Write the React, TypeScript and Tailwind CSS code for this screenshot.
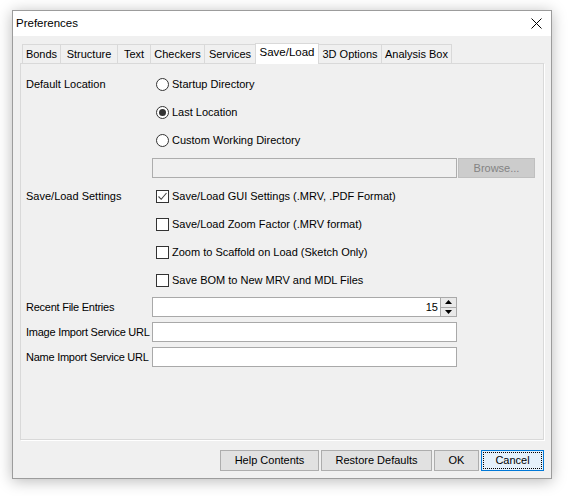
import React from 'react'

const tabs = [
  { name: 'Bonds', w: 'w-[39px]' },
  { name: 'Structure', w: 'w-[58px]' },
  { name: 'Text', w: 'w-[34px]' },
  { name: 'Checkers', w: 'w-[55px]' },
  { name: 'Services', w: 'w-[52px]' },
  { name: 'Save/Load', w: 'w-[64px]', active: true },
  { name: '3D Options', w: 'w-[64px]' },
  { name: 'Analysis Box', w: 'w-[71px]' },
]

function Radio({ checked }: { checked?: boolean }) {
  return (
    <span className="flex h-[13px] w-[13px] items-center justify-center rounded-full border border-[#333] bg-white">
      {checked && <span className="h-[7px] w-[7px] rounded-full bg-[#333]" />}
    </span>
  )
}

function Check({ checked }: { checked?: boolean }) {
  return (
    <span className="flex h-[13px] w-[13px] items-center justify-center border border-[#333] bg-white">
      {checked && (
        <svg width="11" height="11" viewBox="0 0 11 11">
          <path d="M1.5 5.5 L4.2 8.3 L9.5 2" fill="none" stroke="#444" strokeWidth="1.1" />
        </svg>
      )}
    </span>
  )
}

function Row({ label, children }: { label?: string; children: React.ReactNode }) {
  return (
    <div className="flex h-[28px] items-center">
      <div className="w-[126px] shrink-0">{label}</div>
      {children}
    </div>
  )
}

function Option({ kind, checked, text }: { kind: 'radio' | 'check'; checked?: boolean; text: string }) {
  return (
    <div className="flex items-center gap-[3px] pl-[4px]">
      {kind === 'radio' ? <Radio checked={checked} /> : <Check checked={checked} />}
      <span>{text}</span>
    </div>
  )
}

function FieldRow({ label, children, first }: { label: string; children?: React.ReactNode; first?: boolean }) {
  return (
    <div className={`flex h-[20px] items-center ${first ? 'mt-[3px]' : 'mt-[5px]'}`}>
      <div className="w-[126px] shrink-0 overflow-hidden whitespace-nowrap tracking-[-0.25px]">{label}</div>
      <div className="flex h-[20px] w-[305px] items-center border border-[#a9a9a9] bg-white">{children}</div>
    </div>
  )
}

function Button({ w, children, focus }: { w: string; children: React.ReactNode; focus?: boolean }) {
  if (focus) {
    return (
      <div className={`${w} flex h-[21px] items-center justify-center border border-[#0078d7] bg-[#e5f1fb] p-[1px]`}>
        <div className="flex h-full w-full items-center justify-center border border-dotted border-black">{children}</div>
      </div>
    )
  }
  return (
    <div className={`${w} flex h-[21px] items-center justify-center border border-[#adadad] bg-[#e1e1e1]`}>{children}</div>
  )
}

export default function App() {
  return (
    <div className="h-[496px] w-[568px] bg-white pl-[12px] pt-[10px] text-[11px] text-black" style={{ fontFamily: '"Liberation Sans", Arial, sans-serif' }}>
      <div className="flex h-[469px] w-[540px] flex-col border border-[#9c9c9c] bg-[#f0f0f0] shadow-[0_2px_14px_rgba(0,0,0,0.28)]">
        {/* Title bar */}
        <div className="flex h-[25px] shrink-0 items-center justify-between bg-white pl-[3px] pr-[9px]">
          <span className="text-[11.5px]">Preferences</span>
          <svg width="11" height="11" viewBox="0 0 11 11">
            <path d="M0.5 0.5 L10.5 10.5 M10.5 0.5 L0.5 10.5" stroke="#000" strokeWidth="1" />
          </svg>
        </div>

        <div className="flex flex-1 flex-col px-[7px] pt-[7px]">
          {/* Tabs */}
          <div className="flex h-[20px] items-end pl-[2px]">
            {tabs.map((t, i) =>
              t.active ? (
                <div key={t.name} className={`${t.w} relative z-10 -mb-px -ml-px flex h-[21px] items-center justify-center border border-b-0 border-[#d9d9d9] bg-white pb-[2px] text-[11.5px]`}>
                  {t.name}
                </div>
              ) : (
                <div key={t.name} className={`${t.w} ${i > 0 ? '-ml-px' : ''} flex h-[19px] items-center justify-center border border-b-0 border-[#d9d9d9] bg-[#f0f0f0]`}>
                  {t.name}
                </div>
              )
            )}
          </div>

          {/* Panel */}
          <div className="flex h-[377px] flex-col border border-[#d9d9d9] bg-[#f0f0f0] pl-[5px] pt-[6px] shadow-[1px_1px_0_#ffffff]">
            <Row label="Default Location">
              <Option kind="radio" text="Startup Directory" />
            </Row>
            <Row>
              <Option kind="radio" checked text="Last Location" />
            </Row>
            <Row>
              <Option kind="radio" text="Custom Working Directory" />
            </Row>
            <Row>
              <div className="h-[20px] w-[305px] border border-[#adadad] bg-[#f0f0f0]" />
              <div className="ml-[1px] flex h-[20px] w-[77px] items-center justify-center border border-[#bfbfbf] bg-[#cccccc] text-[#838383]">
                Browse...
              </div>
            </Row>
            <Row label="Save/Load Settings">
              <Option kind="check" checked text="Save/Load GUI Settings (.MRV, .PDF Format)" />
            </Row>
            <Row>
              <Option kind="check" text="Save/Load Zoom Factor (.MRV format)" />
            </Row>
            <Row>
              <Option kind="check" text="Zoom to Scaffold on Load (Sketch Only)" />
            </Row>
            <Row>
              <Option kind="check" text="Save BOM to New MRV and MDL Files" />
            </Row>
            <FieldRow label="Recent File Entries" first>
              <span className="flex-1 pr-[2px] text-right">15</span>
              <div className="flex h-full w-[16px] flex-col border-l border-[#a9a9a9] bg-[#e9e9e9]">
                <div className="flex flex-1 items-center justify-center border-b border-[#a9a9a9]">
                  <svg width="7" height="4" viewBox="0 0 7 4"><path d="M0 4 L3.5 0 L7 4 Z" fill="#000" /></svg>
                </div>
                <div className="flex flex-1 items-center justify-center">
                  <svg width="7" height="4" viewBox="0 0 7 4"><path d="M0 0 L3.5 4 L7 0 Z" fill="#000" /></svg>
                </div>
              </div>
            </FieldRow>
            <FieldRow label="Image Import Service URL" />
            <FieldRow label="Name Import Service URL" />
          </div>

          {/* Buttons */}
          <div className="mt-[10px] flex justify-end gap-[2px]">
            <Button w="w-[99px]">Help Contents</Button>
            <Button w="w-[111px]">Restore Defaults</Button>
            <Button w="w-[45px]">OK</Button>
            <Button w="w-[63px]" focus>Cancel</Button>
          </div>
        </div>
      </div>
    </div>
  )
}
